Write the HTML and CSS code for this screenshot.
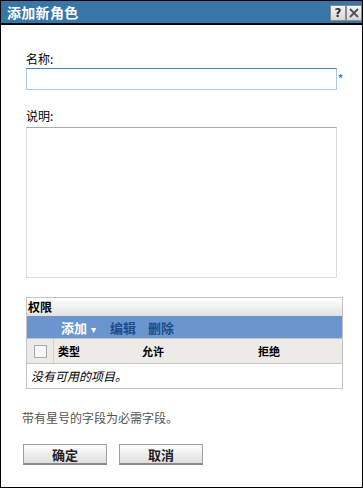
FILE: index.html
```html
<!DOCTYPE html>
<html lang="zh-CN">
<head>
    <meta charset="UTF-8">
    <meta name="viewport" content="width=device-width, initial-scale=1.0">
    <title>添加新角色</title>
    <link rel="stylesheet" href="styles.css">
</head>
<body>
    <div class="dialog">
        <div class="title-bar">
            <span class="title">添加新角色</span>
            <div class="title-buttons">
                <span class="tb-button">?</span>
                <span class="tb-button">
                    <svg width="12" height="12" viewBox="0 0 12 12">
                        <path d="M2 2 L10 10 M10 2 L2 10" stroke="#555" stroke-width="2" fill="none"/>
                    </svg>
                </span>
            </div>
        </div>

        <div class="content">
            <div class="form">
                <label class="label" for="roleName">名称:</label>
                <div class="field-row">
                    <input type="text" id="roleName" class="text-input">
                    <span class="required">*</span>
                </div>

                <label class="label label-desc" for="roleDesc">说明:</label>
                <textarea id="roleDesc" class="text-area"></textarea>

                <div class="perm-table">
                    <div class="perm-header">权限</div>
                    <div class="perm-toolbar">
                        <span class="tool-add">添加<span class="caret">▾</span></span>
                        <span class="tool-link">编辑</span>
                        <span class="tool-link">删除</span>
                    </div>
                    <div class="perm-cols">
                        <div class="col-check"><span class="checkbox"></span></div>
                        <div class="col col-type">类型</div>
                        <div class="col col-allow">允许</div>
                        <div class="col col-deny">拒绝</div>
                    </div>
                    <div class="perm-empty">没有可用的项目。</div>
                </div>
            </div>

            <p class="note">带有星号的字段为必需字段。</p>

            <div class="actions">
                <button class="button">确定</button>
                <button class="button">取消</button>
            </div>
        </div>
    </div>
</body>
</html>
```

FILE: styles.css
```css
body {
    margin: 0;
    padding: 0;
    background-color: #fff;
    font-family: "Noto Sans CJK SC", "DejaVu Sans", sans-serif;
}

.dialog {
    width: 363px;
    height: 488px;
    box-sizing: border-box;
    border: 1px solid #000;
    background-color: #fff;
}

.title-bar {
    height: 22px;
    display: flex;
    align-items: center;
    justify-content: space-between;
    background-color: #3676a9;
    border-bottom: 2px solid #000;
}

.title {
    color: #fff;
    font-size: 14px;
    font-weight: bold;
    line-height: 22px;
    padding-left: 6px;
    letter-spacing: 0.3px;
}

.title-buttons {
    display: flex;
    padding-top: 2px;
}

.tb-button {
    width: 16px;
    height: 16px;
    box-sizing: border-box;
    display: flex;
    align-items: center;
    justify-content: center;
    background: linear-gradient(#f4f4f4, #d6d6d6);
    border: 1px solid #8a8a8a;
    color: #333;
    font-family: "DejaVu Sans", sans-serif;
    font-size: 12px;
    font-weight: bold;
    line-height: 14px;
}

.content {
    padding: 26px 0 0 21px;
}

.form {
    padding-left: 4px;
}

.label {
    display: block;
    font-size: 12px;
    line-height: 16px;
    color: #000;
    margin-bottom: 1px;
}

.label-desc {
    margin-top: 18px;
    margin-bottom: 3px;
}

.field-row {
    display: flex;
    align-items: flex-start;
}

.text-input {
    width: 311px;
    height: 22px;
    margin: 0;
    box-sizing: border-box;
    border: 1px solid #a9c9e6;
    border-top-color: #4f86bd;
    outline: none;
}

.required {
    color: #3b6fb5;
    font-size: 10px;
    font-weight: bold;
    line-height: 10px;
    margin-top: 5px;
    margin-left: 1px;
}

.text-area {
    display: block;
    width: 311px;
    height: 151px;
    margin: 0;
    box-sizing: border-box;
    border: 1px solid #dcdcdc;
    border-top-color: #aaaaaa;
    resize: none;
    outline: none;
}

.perm-table {
    width: 317px;
    margin-top: 19px;
    box-sizing: border-box;
    border: 1px solid #c4c4c4;
}

.perm-header {
    height: 18px;
    line-height: 18px;
    padding-left: 1px;
    font-size: 12px;
    font-weight: bold;
    color: #000;
    background: linear-gradient(#ffffff, #e2e2e2);
}

.perm-toolbar {
    height: 22px;
    display: flex;
    align-items: center;
    gap: 12px;
    padding-left: 34px;
    background-color: #6a96cd;
    border-bottom: 1px solid #c4c4c4;
    font-size: 13px;
    font-weight: bold;
}

.tool-add {
    color: #fff;
    margin-right: 2px;
}

.caret {
    font-size: 10px;
    font-family: "DejaVu Sans", sans-serif;
    margin-left: 4px;
}

.tool-link {
    color: #1f4b8c;
}

.perm-cols {
    display: flex;
    height: 24px;
    background-color: #ecebe8;
    border-bottom: 1px solid #c4c4c4;
    font-size: 11px;
    font-weight: bold;
    color: #000;
}

.col-check {
    width: 26px;
    display: flex;
    align-items: center;
    justify-content: center;
    border-right: 1px solid #d0d0d0;
}

.checkbox {
    width: 11px;
    height: 11px;
    border: 1px solid #a6a6a6;
    background-color: #f8f8f8;
}

.col {
    line-height: 24px;
    padding-left: 4px;
}

.col-type {
    width: 80px;
}

.col-allow {
    width: 112px;
}

.perm-empty {
    height: 24px;
    line-height: 24px;
    padding-left: 4px;
    font-size: 12px;
    font-style: italic;
    color: #000;
}

.note {
    margin: 21px 0 0 0;
    font-size: 12px;
    line-height: 16px;
    color: #555;
}

.actions {
    display: flex;
    gap: 12px;
    margin-top: 18px;
    padding-left: 1px;
}

.button {
    width: 84px;
    height: 21px;
    padding: 0;
    box-sizing: border-box;
    background: linear-gradient(#ffffff, #dedede);
    border: 1px solid #a0a0a0;
    border-bottom: 2px solid #8c8c8c;
    color: #222;
    font-family: "Noto Sans CJK SC", sans-serif;
    font-size: 13px;
    font-weight: bold;
    line-height: 17px;
    cursor: pointer;
}
```
